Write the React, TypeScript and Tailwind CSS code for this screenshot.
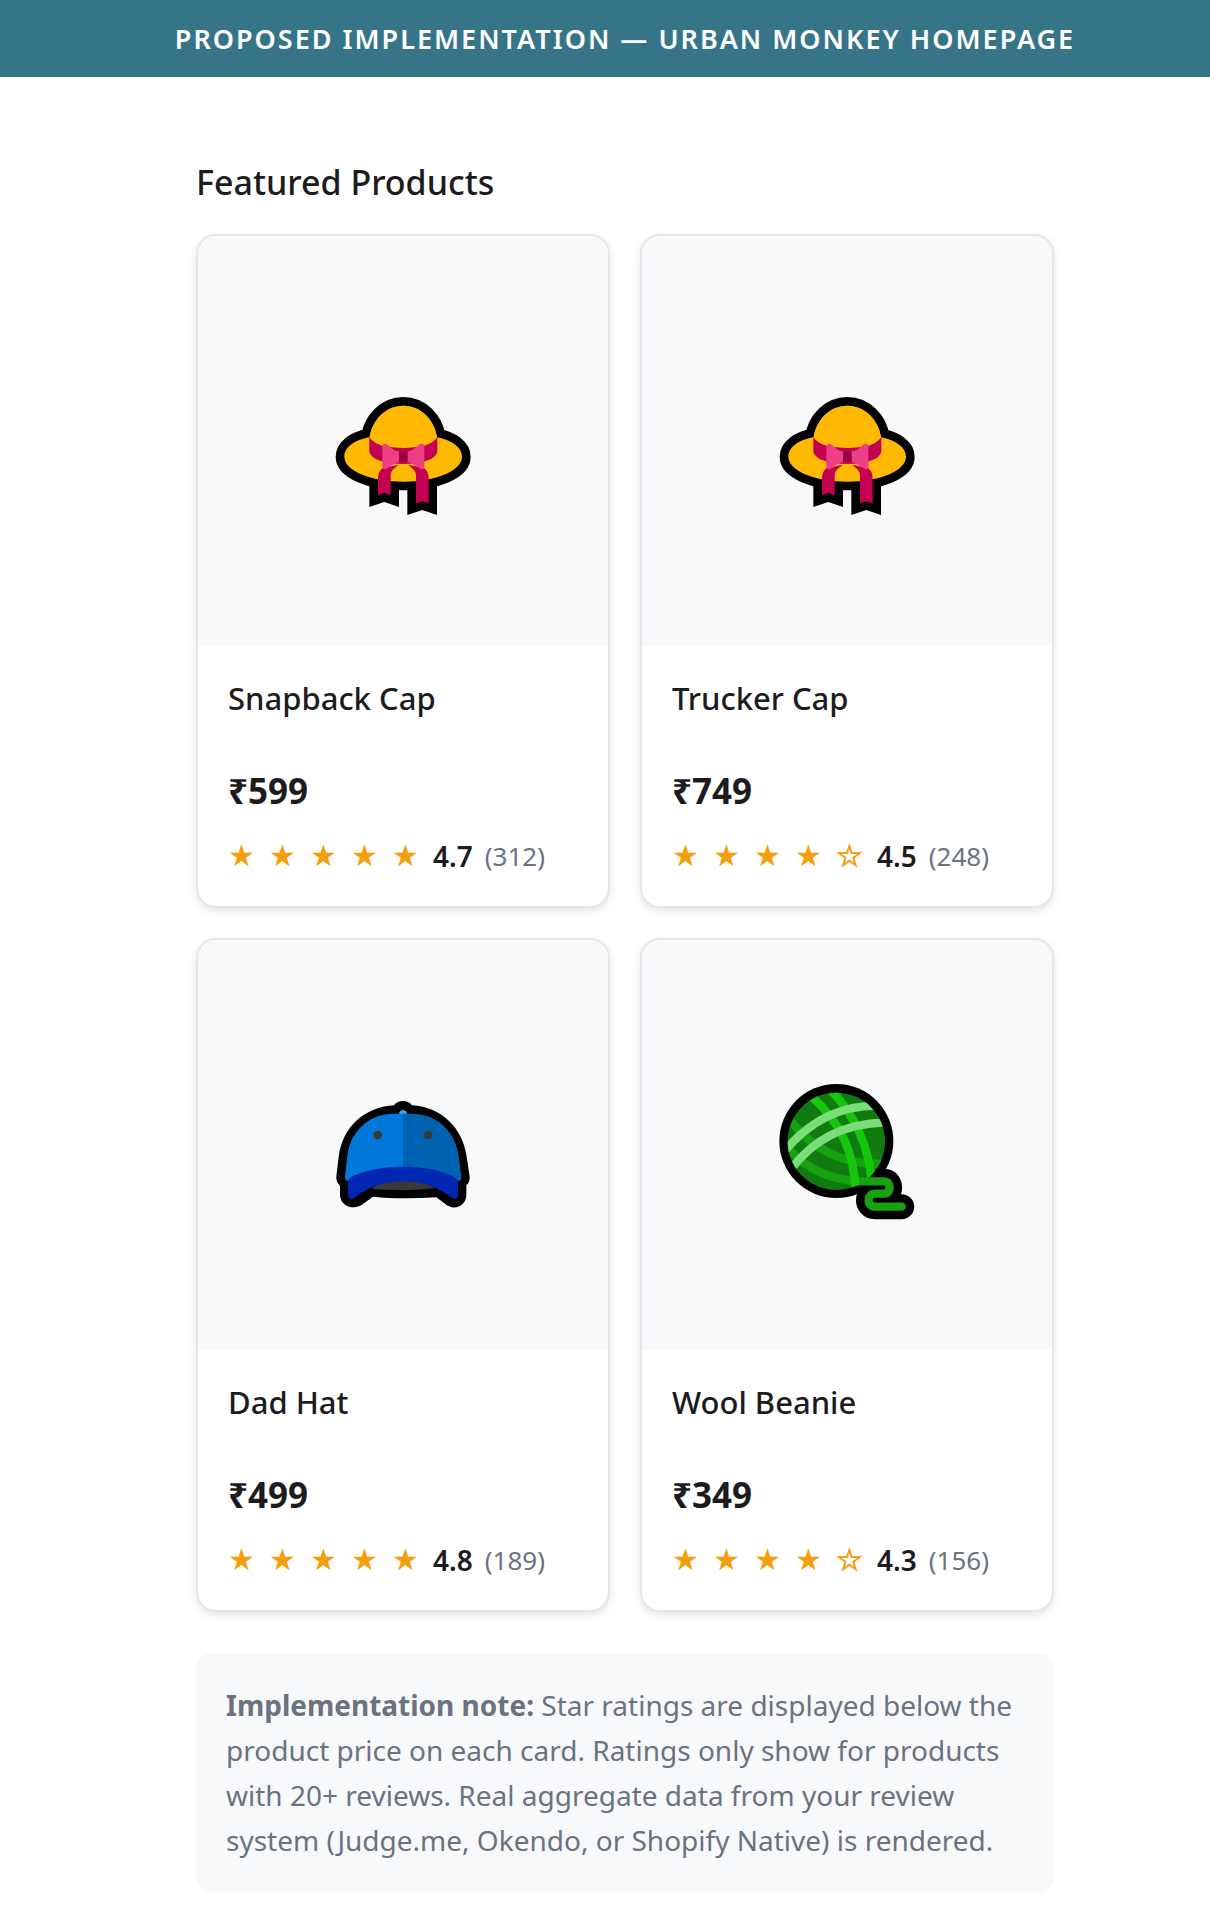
import React from "react";

function SunHat() {
  const silhouette = (
    <path d="M149 172C156 120 198 77 250 77s94 43 101 95c46 9 75 31 75 58 0 42-78 75-176 75S73 272 73 230c0-27 30-51 76-58z" />
  );
  return (
    <svg viewBox="9 -57 480 480" className="size-40" aria-hidden="true">
      <g fill="#000" stroke="#000" strokeWidth="52" strokeLinejoin="round">
        {silhouette}
      </g>
      <path d="M148 290h89v91l-44-15-45 15zM262 290h89v115l-44-15-45 15z" fill="#000" />
      <path d="M237 290h25v40h-25z" fill="#000" />
      <g fill="#ffb900">{silhouette}</g>
      <path
        d="M148 166c2 12 17 24 40 32h124c23-8 38-20 40-32v48c-2 15-18 26-44 32-32 8-84 8-116 0-25-6-42-17-44-32z"
        fill="#c30052"
      />
      <path d="M149 172C156 120 198 77 250 77s94 43 101 95c-24 43-178 43-202 0z" fill="#ffb900" />
      <path d="M188 264c-9 8-14 17-14 30v52l19-8 19 8v-60c0-9 4-14 9-19l15-13z" fill="#c30052" />
      <path d="M312 264c9 8 14 17 14 30v76l-19-6-19 6v-84c0-9-4-14-9-19l-15-13z" fill="#c30052" />
      <path
        d="M187 199c0-8 9-10 15-5 12 8 20 20 36 20v31c-16 4-28 13-36 20-6 5-15 3-15-5zM313 199c0-8-9-10-15-5-12 8-20 20-36 20v31c16 4 28 13 36 20 6 5 15 3 15-5z"
        fill="#ee3f86"
      />
      <path d="M237 214h26v31h-26z" fill="#9b0042" />
    </svg>
  );
}

function BaseballCap() {
  return (
    <svg viewBox="9 -45 480 480" className="size-40" aria-hidden="true">
      <path
        d="M249 63c12 0 22 5 27 13 90 6 152 68 164 154l9 60c1 10-3 20-10 26v28c0 33-36 50-62 29l-28-21c-65 4-135 4-190-2l-31 23c-27 20-68 5-68-29v-27c-8-7-12-16-11-28l7-58C68 142 130 82 222 76c5-8 15-13 27-13z"
        fill="#000"
      />
      <path d="M237 110v-8c0-16 24-16 24 0v8z" fill="#429ce3" />
      <path d="M249 101h-34c-75 3-126 60-133 127l-7 62c-1 8 4 14 12 13l162-30z" fill="#0078d9" />
      <path d="M249 101h34c75 4 124 60 133 127l8 62c1 8-4 14-11 13l-164-30z" fill="#0063b1" />
      <circle cx="173" cy="165" r="13" fill="#393939" />
      <circle cx="325" cy="165" r="13" fill="#393939" />
      <path d="M154 326c42-34 148-34 191-1-55 7-136 7-191 1z" fill="#393939" />
      <path
        d="M84 304c3-18 71-44 165-44s161 26 165 44v42c0 10-10 14-19 7-39-29-82-49-146-49s-107 20-146 49c-9 7-19 3-19-7z"
        fill="#0027b4"
      />
    </svg>
  );
}

function YarnBall() {
  return (
    <svg viewBox="21 -15 480 480" className="size-40" aria-hidden="true">
      <defs>
        <clipPath id="yarn-ball">
          <circle cx="229" cy="214" r="146" />
        </clipPath>
      </defs>
      <circle cx="229" cy="213" r="171" fill="#000" />
      <path
        d="M324 334H373C394 334 394 371 373 371H345C319 371 319 410 345 410H425"
        fill="none"
        stroke="#000"
        strokeWidth="75"
        strokeLinecap="round"
        strokeLinejoin="round"
      />
      <circle cx="229" cy="214" r="146" fill="#107c10" />
      <g clipPath="url(#yarn-ball)" fill="none" strokeWidth="25">
        <path d="M74 225C130 292 200 330 300 334" stroke="#16a10e" />
        <path d="M90 150C155 235 245 285 372 282" stroke="#16a10e" />
        <path d="M150 75C228 142 284 236 286 362" stroke="#16c60c" />
        <path d="M206 55C276 122 330 225 335 345" stroke="#16c60c" />
        <path d="M70 248C138 164 230 107 350 107" stroke="#7bdd78" />
        <path d="M90 301C162 207 252 159 385 157" stroke="#7bdd78" />
      </g>
      <path
        d="M290 334H373C394 334 394 371 373 371H345C319 371 319 410 345 410H425"
        fill="none"
        stroke="#16a10e"
        strokeWidth="25"
        strokeLinecap="round"
        strokeLinejoin="round"
      />
      <path d="M273 352c0-14-1-22-2-32h26c1 10 1 17 1 25z" fill="#16c60c" />
    </svg>
  );
}

type Product = {
  name: string;
  price: string;
  stars: number;
  rating: string;
  reviews: number;
  Icon: () => React.ReactElement;
};

const products: Product[] = [
  { name: "Snapback Cap", price: "₹599", stars: 5, rating: "4.7", reviews: 312, Icon: SunHat },
  { name: "Trucker Cap", price: "₹749", stars: 4, rating: "4.5", reviews: 248, Icon: SunHat },
  { name: "Dad Hat", price: "₹499", stars: 5, rating: "4.8", reviews: 189, Icon: BaseballCap },
  { name: "Wool Beanie", price: "₹349", stars: 4, rating: "4.3", reviews: 156, Icon: YarnBall },
];

function ProductCard({ name, price, stars, rating, reviews, Icon }: Product) {
  return (
    <article className="overflow-hidden rounded-[20px] border-2 border-[#e5e7eb] bg-white shadow-[0_3px_8px_rgba(0,0,0,0.1)]">
      <div className="flex aspect-square items-center justify-center bg-[#f8f9fb]">
        <Icon />
      </div>
      <div className="px-[30px] pt-[30px] pb-7">
        <h3 className="text-[31px] leading-[44px] font-medium">{name}</h3>
        <p className="mt-12 text-[35px] leading-[46px] font-bold">{price}</p>
        <div className="mt-5 flex items-center leading-[44px]">
          <div
            className="flex font-['DejaVu_Sans',sans-serif] text-[30px] text-[#f59e0b]"
            aria-label={`${rating} out of 5 stars`}
          >
            {[1, 2, 3, 4, 5].map((n) =>
              n <= stars ? (
                <span key={n} className="w-[41px]">
                  ★
                </span>
              ) : (
                <span key={n} className="w-[41px] [-webkit-text-stroke:1px_#f59e0b]">
                  ☆
                </span>
              ),
            )}
          </div>
          <span className="text-[28px] font-semibold">{rating}</span>
          <span className="ml-3 text-[26px] text-[#6b7280]">({reviews})</span>
        </div>
      </div>
    </article>
  );
}

export default function App() {
  return (
    <div className="min-h-screen bg-white font-['Noto_Sans','Open_Sans',sans-serif] text-[#1c1c1e]">
      <header className="bg-[#367588] py-5 pl-10 text-center text-[27px] leading-[37px] font-semibold tracking-[2px] text-white">
        PROPOSED IMPLEMENTATION — URBAN MONKEY HOMEPAGE
      </header>
      <div className="pl-10">
        <main className="mx-auto max-w-[858px] pt-20 pb-[38px]">
          <h2 className="text-[34px] leading-[50px] font-medium">Featured Products</h2>
          <section className="mt-[27px] grid grid-cols-2 gap-[30px]">
            {products.map((p) => (
              <ProductCard key={p.name} {...p} />
            ))}
          </section>
          <aside className="mt-[41px] rounded-2xl bg-[#f8f9fb] p-[30px] text-[28px] leading-[45px] text-[#6b7280]">
            <strong className="font-bold">Implementation note:</strong> Star ratings are displayed
            below the product price on each card. Ratings only show for products with 20+ reviews.
            Real aggregate data from your review system (Judge.me, Okendo, or Shopify Native) is
            rendered.
          </aside>
        </main>
      </div>
    </div>
  );
}
